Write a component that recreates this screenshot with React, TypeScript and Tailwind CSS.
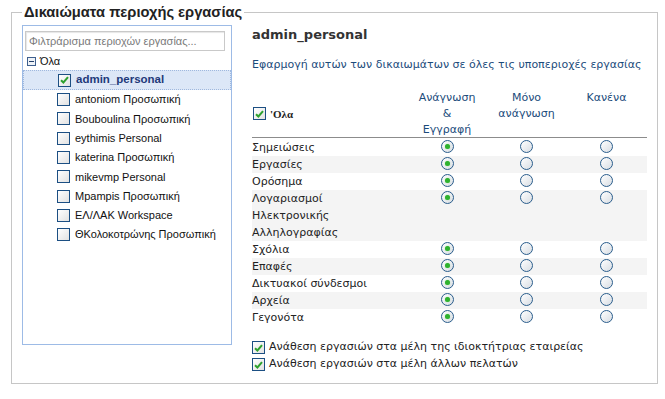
import React from 'react'

const workspaces = [
  'antoniom Προσωπική',
  'Bouboulina Προσωπική',
  'eythimis Personal',
  'katerina Προσωπική',
  'mikevmp Personal',
  'Mpampis Προσωπική',
  'ΕΛ/ΛΑΚ Workspace',
  'ΘΚολοκοτρώνης Προσωπική',
]

const areas: { label: React.ReactNode; tall?: boolean }[] = [
  { label: 'Σημειώσεις' },
  { label: 'Εργασίες' },
  { label: 'Ορόσημα' },
  {
    label: (
      <>
        Λογαριασμοί
        <br />
        Ηλεκτρονικής
        <br />
        Αλληλογραφίας
      </>
    ),
    tall: true,
  },
  { label: 'Σχόλια' },
  { label: 'Επαφές' },
  { label: 'Δικτυακοί σύνδεσμοι' },
  { label: 'Αρχεία' },
  { label: 'Γεγονότα' },
]

function Check({ checked }: { checked?: boolean }) {
  return (
    <span className="flex h-[13px] w-[13px] shrink-0 items-center justify-center border border-[#1c4f83] bg-gradient-to-br from-[#ffffff] to-[#e2e2e2]">
      {checked && (
        <svg width="9" height="8" viewBox="0 0 9 8">
          <path d="M1 4.2 L3.4 6.5 L8 1.2" fill="none" stroke="#2ea12e" strokeWidth="2" />
        </svg>
      )}
    </span>
  )
}

function Radio({ checked }: { checked?: boolean }) {
  return (
    <span className="flex h-[13px] w-[13px] items-center justify-center rounded-full border border-[#2a5d8c] bg-gradient-to-br from-[#ffffff] to-[#d8dde3]">
      {checked && <span className="h-[5px] w-[5px] rounded-full bg-[#2fb12f] shadow-[0_0_1px_#7ee07e]" />}
    </span>
  )
}

export default function App() {
  return (
    <div className="min-h-[399px] bg-white pt-[4px] pl-[11px]">
      <fieldset className="w-[647px] border border-[#c6c6c6] px-[10px] pt-[5px] pb-[10px]">
        <legend className="ml-0 px-[2px] text-[14.7px] leading-[16px] font-bold text-[#222] [font-family:'Liberation_Sans',Arial,sans-serif]">
          Δικαιώματα περιοχής εργασίας
        </legend>

        <div className="flex gap-[20px]">
          {/* workspace tree */}
          <div className="h-[320px] w-[210px] shrink-0 border border-[#9dbbe6] [font-family:'Liberation_Sans',Arial,sans-serif]">
            <div className="mt-[5px] ml-[2px] flex h-[20px] w-[200px] items-center border border-[#c9c9c9] px-[3px] text-[11px] text-[#7a7a7a] shadow-[inset_1px_1px_1px_#e6e6e6]">
              Φιλτράρισμα περιοχών εργασίας...
            </div>
            <div className="mt-[2px] flex h-[17px] items-center pl-[4px] text-[11px] text-[#111]">
              <span className="mr-[4px] flex h-[9px] w-[9px] items-center justify-center border border-[#3e5f8e] bg-[#eef2f7]">
                <span className="h-[1px] w-[5px] bg-[#223f6a]" />
              </span>
              Όλα
            </div>
            <div className="flex h-[20px] items-center border border-dotted border-[#9fb8de] bg-[#dce7f7] pl-[34px] text-[11.5px] font-bold text-[#1f3a7a]">
              <Check checked />
              <span className="ml-[5px]">admin_personal</span>
            </div>
            {workspaces.map((w) => (
              <div key={w} className="flex h-[19.3px] items-center pl-[34px] text-[11px] text-[#111]">
                <Check />
                <span className="ml-[5px]">{w}</span>
              </div>
            ))}
          </div>

          {/* permissions */}
          <div className="w-[395px] text-[11px] [font-family:'DejaVu_Sans',Verdana,sans-serif]">
            <div className="mt-[2px] text-[13px] leading-[16px] font-bold text-[#333]">admin_personal</div>
            <div className="mt-[15px] leading-[14px] text-[#1b4b7b]">
              Εφαρμογή αυτών των δικαιωμάτων σε όλες τις υποπεριοχές εργασίας
            </div>

            <div className="mt-[17px] grid h-[49px] grid-cols-[155px_80px_79px_81px] border-b border-[#8c8c8c] leading-[16px] text-[#1b4b7b]">
              <div className="flex items-center gap-[4px] pl-[1px]">
                <Check checked />
                <span className="text-[11px] font-bold text-[#222] [font-family:'Liberation_Serif',serif]">'Ολα</span>
              </div>
              <div className="pt-[1px] text-center">
                Ανάγνωση
                <br />&amp;
                <br />
                Εγγραφή
              </div>
              <div className="pt-[1px] text-center">
                Μόνο
                <br />
                ανάγνωση
              </div>
              <div className="pt-[1px] text-center">Κανένα</div>
            </div>

            <div className="mt-[1px]">
              {areas.map((a, i) => (
                <div
                  key={i}
                  className={`grid grid-cols-[155px_80px_79px_81px] leading-[17px] text-[#222] ${i % 2 === 1 ? 'bg-[#f4f4f4]' : ''} ${a.tall ? 'h-[51px]' : 'h-[17px]'}`}
                >
                  <div>{a.label}</div>
                  <div className="flex justify-center pt-[1px]">
                    <Radio checked />
                  </div>
                  <div className="flex justify-center pt-[1px]">
                    <Radio />
                  </div>
                  <div className="flex justify-center pt-[1px]">
                    <Radio />
                  </div>
                </div>
              ))}
            </div>

            <div className="mt-[13px] text-[#222]">
              <div className="flex h-[17px] items-center gap-[4px]">
                <Check checked />
                Ανάθεση εργασιών στα μέλη της ιδιοκτήτριας εταιρείας
              </div>
              <div className="flex h-[17px] items-center gap-[4px]">
                <Check checked />
                Ανάθεση εργασιών στα μέλη άλλων πελατών
              </div>
            </div>
          </div>
        </div>
      </fieldset>
    </div>
  )
}
